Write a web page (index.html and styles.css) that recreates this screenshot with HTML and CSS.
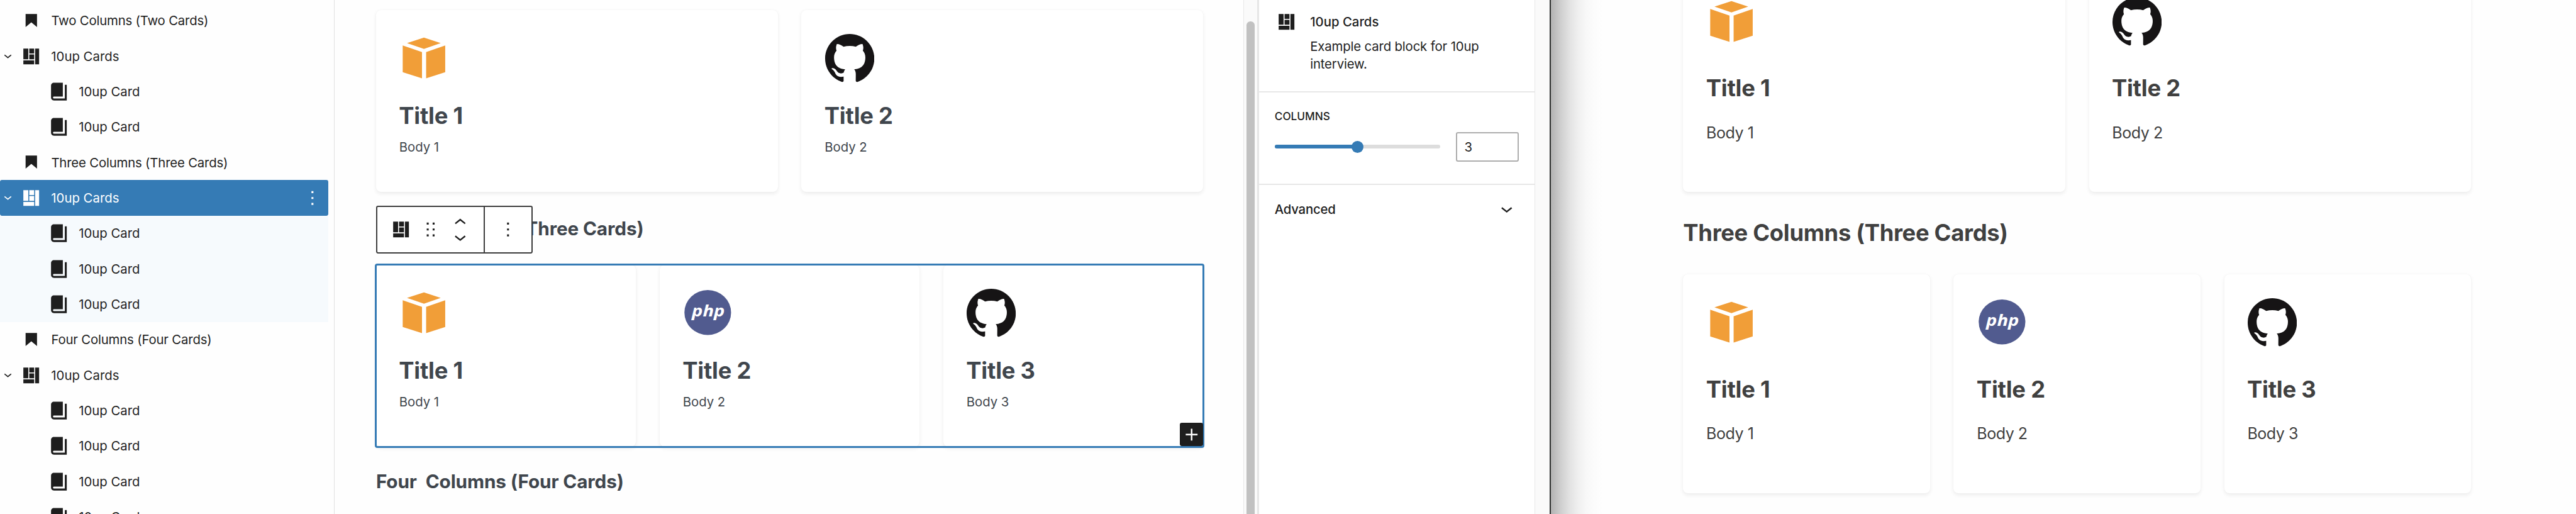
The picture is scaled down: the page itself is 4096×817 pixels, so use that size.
FILE: index.html
```html
<!DOCTYPE html>
<html lang="en">
<head>
<meta charset="utf-8">
<title>10up Cards</title>
<link rel="stylesheet" href="styles.css">
</head>
<body>
<svg class="sprite" aria-hidden="true">
  <symbol id="heading" viewBox="0 0 24 24"><path d="M6.2 5.2v13.4l5.8-4.8 5.8 4.8V5.2z"/></symbol>
  <symbol id="layout" viewBox="0 0 20 20"><path d="M2 2h5v11H2V2zm6 0h5v5H8V2zm6 0h4v16h-4V2zM8 8h5v5H8V8zm-6 6h11v4H2v-4z"/></symbol>
  <symbol id="book" viewBox="0 0 20 20"><path d="M16 3h2v16H5c-1.66 0-3-1.34-3-3V4c0-1.66 1.34-3 3-3h9v14H5c-.55 0-1 .45-1 1s.45 1 1 1h11V3z"/></symbol>
  <symbol id="down" viewBox="0 0 24 24"><path d="M17.5 11.6L12 16l-5.5-4.4.9-1.2L12 14l4.5-3.6 1 1.2z"/></symbol>
  <symbol id="up" viewBox="0 0 24 24"><path d="M6.5 12.4L12 8l5.5 4.4-.9 1.2L12 10l-4.5 3.6-1-1.2z"/></symbol>
  <symbol id="more" viewBox="0 0 24 24"><path d="M13 19h-2v-2h2v2zm0-6h-2v-2h2v2zm0-6h-2V5h2v2z"/></symbol>
  <symbol id="drag" viewBox="0 0 24 24"><path d="M8 5h2v2H8zM14 5h2v2h-2zM8 11h2v2H8zM14 11h2v2h-2zM8 17h2v2H8zM14 17h2v2h-2z"/></symbol>
  <symbol id="plus" viewBox="0 0 24 24"><path d="M18 11.2h-5.2V6h-1.6v5.2H6v1.6h5.2V18h1.6v-5.2H18z"/></symbol>
  <symbol id="cube" viewBox="0 0 100 100"><path fill="#f19e38" d="M50 8.5L84 19.8 50 31.5 15.5 19.8zM6.8 24.5L46 38v53.5L6.8 79zM93.2 24.5L54.4 38v53.5L93.2 79z"/></symbol>
  <symbol id="php" viewBox="0 0 100 100"><ellipse cx="50.3" cy="49.5" rx="47.4" ry="45.6" fill="#515b8f"/><text x="18" y="58" textLength="67" lengthAdjust="spacingAndGlyphs" class="php-text">php</text></symbol>
  <symbol id="github" viewBox="0 0 24 24"><path fill="#161415" d="M12 .297c-6.63 0-12 5.373-12 12 0 5.303 3.438 9.8 8.205 11.385.6.113.82-.258.82-.577 0-.285-.01-1.04-.015-2.04-3.338.724-4.042-1.61-4.042-1.61C4.422 18.07 3.633 17.7 3.633 17.7c-1.087-.744.084-.729.084-.729 1.205.084 1.838 1.236 1.838 1.236 1.07 1.835 2.809 1.305 3.495.998.108-.776.417-1.305.76-1.605-2.665-.3-5.466-1.332-5.466-5.93 0-1.31.465-2.38 1.235-3.22-.135-.303-.54-1.523.105-3.176 0 0 1.005-.322 3.3 1.23.96-.267 1.98-.399 3-.405 1.02.006 2.04.138 3 .405 2.28-1.552 3.285-1.23 3.285-1.23.645 1.653.24 2.873.12 3.176.765.84 1.23 1.91 1.23 3.22 0 4.61-2.805 5.625-5.475 5.92.42.36.81 1.096.81 2.22 0 1.606-.015 2.896-.015 3.286 0 .315.21.69.825.57C20.565 22.092 24 17.592 24 12.297c0-6.627-5.373-12-12-12"/></symbol>
</svg>
<div class="screen">
  <nav class="outline">
    <div class="row"><svg class="i24"><use href="#heading"/></svg><span>Two Columns (Two Cards)</span></div>
    <div class="row"><svg class="chev"><use href="#down"/></svg><svg class="i20"><use href="#layout"/></svg><span>10up Cards</span></div>
    <div class="row child"><svg class="i20"><use href="#book"/></svg><span>10up Card</span></div>
    <div class="row child"><svg class="i20"><use href="#book"/></svg><span>10up Card</span></div>
    <div class="row"><svg class="i24"><use href="#heading"/></svg><span>Three Columns (Three Cards)</span></div>
    <div class="row selected"><svg class="chev"><use href="#down"/></svg><svg class="i20"><use href="#layout"/></svg><span>10up Cards</span><svg class="i24 dots"><use href="#more"/></svg></div>
    <div class="row child tint"><svg class="i20"><use href="#book"/></svg><span>10up Card</span></div>
    <div class="row child tint"><svg class="i20"><use href="#book"/></svg><span>10up Card</span></div>
    <div class="row child tint"><svg class="i20"><use href="#book"/></svg><span>10up Card</span></div>
    <div class="row"><svg class="i24"><use href="#heading"/></svg><span>Four Columns (Four Cards)</span></div>
    <div class="row"><svg class="chev"><use href="#down"/></svg><svg class="i20"><use href="#layout"/></svg><span>10up Cards</span></div>
    <div class="row child"><svg class="i20"><use href="#book"/></svg><span>10up Card</span></div>
    <div class="row child"><svg class="i20"><use href="#book"/></svg><span>10up Card</span></div>
    <div class="row child"><svg class="i20"><use href="#book"/></svg><span>10up Card</span></div>
    <div class="row child"><svg class="i20"><use href="#book"/></svg><span>10up Card</span></div>
  </nav>

  <main class="editor">
    <div class="cards two">
      <article class="card"><svg class="logo"><use href="#cube"/></svg><h3>Title 1</h3><p>Body 1</p></article>
      <article class="card"><svg class="logo"><use href="#github"/></svg><h3>Title 2</h3><p>Body 2</p></article>
    </div>
    <div class="heading-wrap">
      <h2>Three Columns (Three Cards)</h2>
      <div class="toolbar">
        <div class="group main">
          <svg class="i20"><use href="#layout"/></svg>
          <svg class="i24"><use href="#drag"/></svg>
          <div class="movers"><svg class="i24"><use href="#up"/></svg><svg class="i24"><use href="#down"/></svg></div>
        </div>
        <div class="group last"><svg class="i24"><use href="#more"/></svg></div>
      </div>
    </div>
    <div class="cards three active">
      <article class="card"><svg class="logo"><use href="#cube"/></svg><h3>Title 1</h3><p>Body 1</p></article>
      <article class="card"><svg class="logo"><use href="#php"/></svg><h3>Title 2</h3><p>Body 2</p></article>
      <article class="card"><svg class="logo"><use href="#github"/></svg><h3>Title 3</h3><p>Body 3</p></article>
      <div class="add"><svg class="i24"><use href="#plus"/></svg></div>
    </div>
    <h2 class="next">Four&nbsp; Columns (Four Cards)</h2>
  </main>

  <div class="track"><div class="thumb"></div></div>

  <aside class="panel">
    <section class="about">
      <svg class="i20"><use href="#layout"/></svg>
      <div><strong>10up Cards</strong><p>Example card block for 10up<br>interview.</p></div>
    </section>
    <section class="settings">
      <label>COLUMNS</label>
      <div class="control">
        <div class="slider"><div class="fill"></div><div class="knob"></div></div>
        <div class="number">3</div>
      </div>
    </section>
    <section class="advanced"><strong>Advanced</strong><svg class="i24"><use href="#down"/></svg></section>
  </aside>
  <div class="gutter"></div>

  <div class="front">
    <div class="cards two">
      <article class="card"><svg class="logo"><use href="#cube"/></svg><h3>Title 1</h3><p>Body 1</p></article>
      <article class="card"><svg class="logo"><use href="#github"/></svg><h3>Title 2</h3><p>Body 2</p></article>
    </div>
    <h2>Three Columns (Three Cards)</h2>
    <div class="cards three">
      <article class="card"><svg class="logo"><use href="#cube"/></svg><h3>Title 1</h3><p>Body 1</p></article>
      <article class="card"><svg class="logo"><use href="#php"/></svg><h3>Title 2</h3><p>Body 2</p></article>
      <article class="card"><svg class="logo"><use href="#github"/></svg><h3>Title 3</h3><p>Body 3</p></article>
    </div>
  </div>
</div>
</body>
</html>
```
FILE: styles.css
```css
/* 1rem is one hundred design pixels; the layout is sized in rem throughout. */
html { font-size: 78.257px; }
* { box-sizing: border-box; }
body { margin: 0; font-family: Inter, "Liberation Sans", sans-serif; font-size: .26rem; color: #1e1e1e; background: #fefefe; overflow: hidden; }
h2, h3, p { margin: 0; }
svg { display: block; flex: none; fill: currentColor; }
.sprite { position: absolute; width: 0; height: 0; }
.i24 { width: .48rem; height: .48rem; }
.i20 { width: .4rem; height: .4rem; }
.php-text { font: italic 700 31px "Open Sans", sans-serif; fill: #fff; }

.screen { display: flex; width: 100vw; height: 100vh; overflow: hidden; }

.outline { width: 6.8rem; flex: none; padding: .06rem .12rem 0 0; border-right: .02rem solid #e0e0e0; overflow: hidden; }
.row { height: .72rem; display: flex; align-items: center; padding-left: .4rem; color: #1e1e1e; }
.row .i24 { margin-right: .16rem; }
.row .i20 { margin: 0 .2rem 0 .04rem; }
.row .i24 + span { letter-spacing: -.0022rem; }
.row .chev { width: .32rem; height: .32rem; margin: -.02rem .08rem 0 -.4rem; }
.row.child { padding-left: .96rem; }
.row.tint { background: #f6fafd; }
.row.selected { background: #357bb5; color: #fff; border-radius: .04rem; }
.row .dots { margin: 0 .08rem 0 auto; }

.editor { width: 18.46rem; flex: none; padding: .2rem 0 0 .84rem; color: #40464d; }
.cards { display: grid; gap: .48rem; position: relative; }
.two { grid-template-columns: repeat(2, 1fr); }
.three { grid-template-columns: repeat(3, 1fr); }
.editor .cards { width: 16.81rem; height: 3.7rem; }
.card { background: #fff; border-radius: .1rem; padding: .48rem; box-shadow: 0 .03rem .08rem rgba(0, 0, 0, .07), 0 0 .02rem rgba(0, 0, 0, .05); }
.logo { width: 1rem; height: 1rem; }
.card h3 { font-size: .465rem; line-height: .56rem; margin: .408rem 0 0 -.015rem; font-weight: 700; letter-spacing: -.003rem; }
.card p { font-size: .26rem; line-height: .36rem; margin: .159rem 0 0 -.01rem; }
.heading-wrap { position: relative; margin: .505rem 0 .49rem; }
.editor h2 { font-size: .38rem; line-height: .48rem; font-weight: 700; letter-spacing: -.0015rem; }
.editor .next { margin-top: .475rem; }

.toolbar { position: absolute; left: 0; top: -.225rem; width: 3.18rem; height: .97rem; display: flex; background: #fff; border: 2px solid #3c3c3c; border-radius: .04rem; color: #1e1e1e; }
.group { display: flex; align-items: center; }
.group.main { width: 2.19rem; padding-left: .28rem; gap: .16rem; border-right: 2px solid #3c3c3c; }
.group.last { flex: 1; justify-content: center; }
.movers { display: flex; flex-direction: column; margin-left: -.04rem; }
.movers .i24:first-child { margin-bottom: -.19rem; }
.active::after { content: ""; position: absolute; inset: -.02rem; border: .04rem solid #357bb5; border-radius: .05rem; }
.add { position: absolute; right: 0; bottom: .01rem; z-index: 1; width: .48rem; height: .48rem; background: #1e1e1e; color: #fff; border-radius: .04rem; }

.track { width: .32rem; flex: none; background: #fafafa; border-left: .02rem solid #e8e8e8; border-right: .04rem solid #e6e6e6; padding: .44rem .04rem 0 .06rem; }
.thumb { width: .16rem; height: 11rem; border-radius: .08rem; background: #c1c1c1; }

.panel { width: 5.6rem; flex: none; background: #fff; }
.panel strong { font-weight: 500; display: block; }
.about { height: 1.88rem; display: flex; gap: .28rem; padding: .24rem 0 0 .36rem; border-bottom: 2px solid #e7e7e7; }
.about strong { line-height: .4rem; }
.about p { line-height: .36rem; margin-top: .125rem; letter-spacing: -.0018rem; }
.settings { height: 1.88rem; padding: .3rem .32rem 0; border-bottom: 2px solid #e7e7e7; }
.settings label { display: block; font-size: .22rem; line-height: .36rem; font-weight: 500; }
.control { display: flex; align-items: center; justify-content: space-between; margin-top: .14rem; }
.slider { position: relative; width: 3.36rem; height: .08rem; border-radius: .04rem; background: #ddd; }
.fill { width: 50%; height: 100%; border-radius: .04rem; background: #357bb5; }
.knob { position: absolute; left: 50%; top: 50%; width: .24rem; height: .24rem; margin: -.12rem; border-radius: 50%; background: #357bb5; }
.number { width: 1.28rem; height: .6rem; line-height: .57rem; padding-left: .15rem; border: 2px solid #adadad; border-radius: .04rem; }
.advanced { height: .97rem; display: flex; align-items: center; justify-content: space-between; padding: 0 .32rem; letter-spacing: -.003rem; }

.gutter { width: .33rem; flex: none; background: #fafafa; border-left: .02rem solid #e8e8e8; border-right: .03rem solid #2e302f; }

.front { flex: 1; min-width: 0; padding-left: 2.69rem; color: #404040; background: linear-gradient(90deg, #b2b2b2 0, #c0c0c0 .1rem, #d1d1d1 .22rem, #e3e3e3 .39rem, #f0f0f0 .56rem, #f8f8f8 .72rem, #fcfcfc .89rem, #fefefe 1.06rem); }
.front .cards { width: 16.01rem; height: 4.45rem; }
.front .cards.two { margin-top: -.55rem; }
.front .card h3 { margin-top: .59rem; }
.front .card p { font-size: .32rem; line-height: .48rem; margin-top: .38rem; letter-spacing: -.006rem; }
.front h2 { font-size: .465rem; line-height: .58rem; margin: .55rem 0 .54rem; font-weight: 700; letter-spacing: -.004rem; }
```
